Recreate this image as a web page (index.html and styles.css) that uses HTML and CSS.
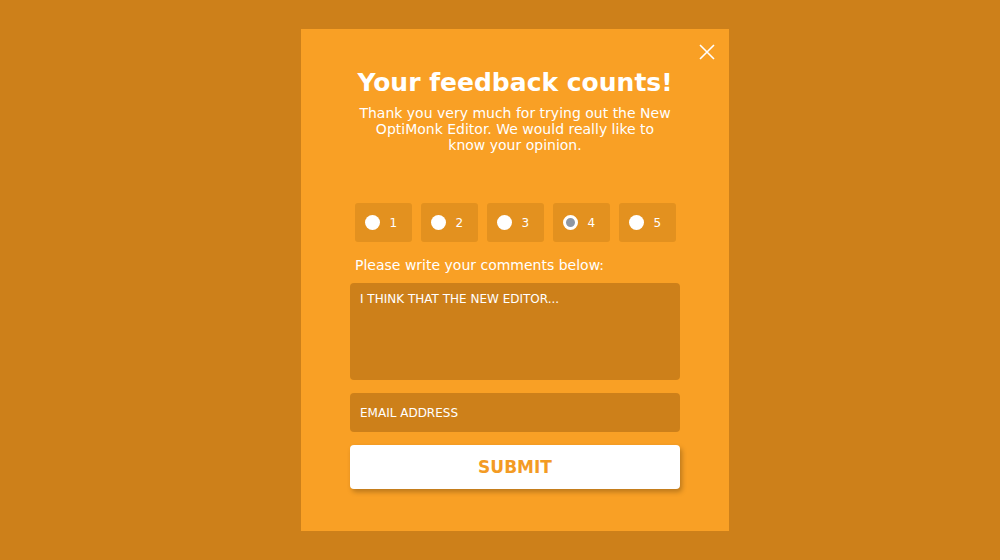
FILE: index.html
```html
<!DOCTYPE html>
<html>
<head>
<meta charset="utf-8">
<link rel="stylesheet" href="styles.css">
</head>
<body>
<div class="page">
  <div class="popup">
    <button class="close" aria-label="Close">
      <svg width="16" height="16" viewBox="0 0 16 16"><path d="M1 1 L15 15 M15 1 L1 15" stroke="#fff" stroke-width="1.6" fill="none"/></svg>
    </button>
    <h1 class="title">Your feedback counts!</h1>
    <p class="intro">Thank you very much for trying out the New OptiMonk Editor. We would really like to know your opinion.</p>
    <div class="rating">
      <label class="opt"><span class="radio"></span><span class="num">1</span></label>
      <label class="opt"><span class="radio"></span><span class="num">2</span></label>
      <label class="opt"><span class="radio"></span><span class="num">3</span></label>
      <label class="opt"><span class="radio checked"></span><span class="num">4</span></label>
      <label class="opt"><span class="radio"></span><span class="num">5</span></label>
    </div>
    <div class="form">
      <p class="label">Please write your comments below:</p>
      <div class="textarea">I THINK THAT THE NEW EDITOR...</div>
      <div class="input">EMAIL ADDRESS</div>
      <div class="submit">SUBMIT</div>
    </div>
  </div>
</div>
</body>
</html>
```
FILE: styles.css
```css
html, body {
  margin: 0;
  padding: 0;
}
body {
  background: #cd801a;
  font-family: "DejaVu Sans", "Noto Sans", sans-serif;
  color: #fff;
  width: 1000px;
  height: 560px;
  overflow: hidden;
}
.page {
  display: flex;
  justify-content: center;
  padding-top: 29px;
  padding-left: 30px;
}
.popup {
  position: relative;
  width: 428px;
  height: 502px;
  background: #f9a025;
  display: flex;
  flex-direction: column;
  align-items: center;
  box-sizing: border-box;
  padding-top: 38px;
}
.close {
  position: absolute;
  top: 15px;
  right: 14px;
  background: none;
  border: 0;
  padding: 0;
  width: 16px;
  height: 16px;
  display: flex;
}
.title {
  margin: 0;
  font-size: 25px;
  font-weight: bold;
  line-height: 32px;
  letter-spacing: 0;
}
.intro {
  margin: 6px 0 0;
  width: 316px;
  text-align: center;
  font-size: 14px;
  line-height: 16px;
}
.rating {
  display: flex;
  gap: 9px;
  margin-top: 50px;
}
.opt {
  width: 57px;
  height: 39px;
  background: #e3911f;
  border-radius: 3px;
  display: flex;
  align-items: center;
  box-sizing: border-box;
  padding-left: 10px;
}
.radio {
  width: 15px;
  height: 15px;
  border-radius: 50%;
  background: #fff;
  box-sizing: border-box;
}
.radio.checked {
  background: #8f97a3;
  border: 3px solid #fff;
}
.num {
  font-size: 12px;
  margin-left: 10px;
}
.form {
  width: 330px;
  display: flex;
  flex-direction: column;
  margin-top: 15px;
}
.label {
  margin: 0 0 10px 5px;
  font-size: 14px;
  line-height: 16px;
}
.textarea {
  height: 97px;
  background: #cd801a;
  border-radius: 4px;
  font-size: 12px;
  padding: 8px 10px 0;
  box-sizing: border-box;
  line-height: 16px;
}
.input {
  margin-top: 13px;
  height: 39px;
  background: #cd801a;
  border-radius: 4px;
  font-size: 12px;
  padding: 0 10px;
  display: flex;
  align-items: center;
}
.submit {
  margin-top: 13px;
  height: 44px;
  background: #fff;
  border-radius: 4px;
  color: #f39b24;
  font-weight: bold;
  font-size: 17px;
  display: flex;
  align-items: center;
  justify-content: center;
  box-shadow: 2px 3px 5px rgba(0,0,0,0.25);
}
```
